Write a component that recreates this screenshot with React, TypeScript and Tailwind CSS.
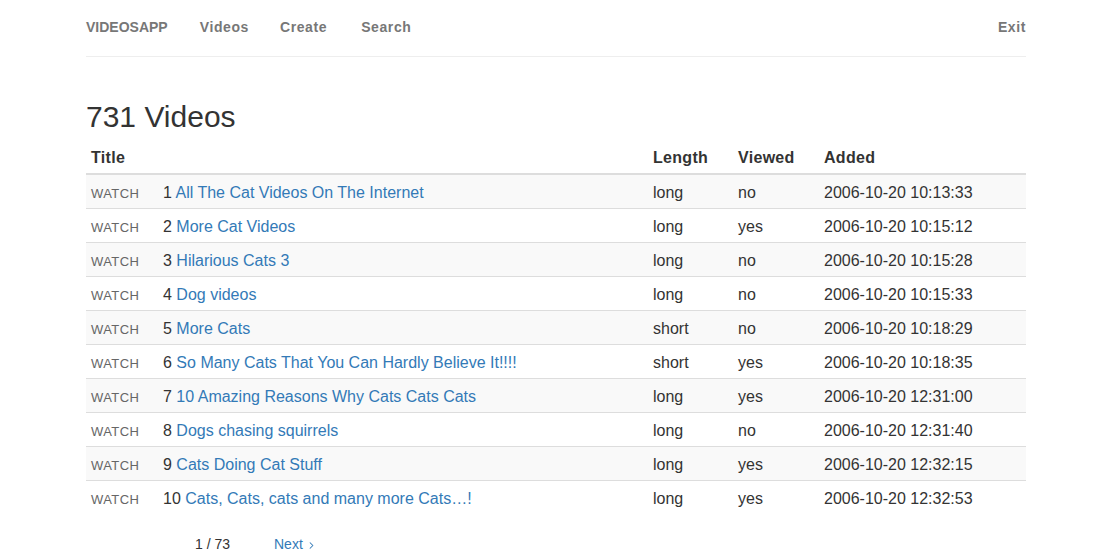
import { ChevronRight } from 'lucide-react'

const videos = [
  { id: 1, title: 'All The Cat Videos On The Internet', length: 'long', viewed: 'no', added: '2006-10-20 10:13:33' },
  { id: 2, title: 'More Cat Videos', length: 'long', viewed: 'yes', added: '2006-10-20 10:15:12' },
  { id: 3, title: 'Hilarious Cats 3', length: 'long', viewed: 'no', added: '2006-10-20 10:15:28' },
  { id: 4, title: 'Dog videos', length: 'long', viewed: 'no', added: '2006-10-20 10:15:33' },
  { id: 5, title: 'More Cats', length: 'short', viewed: 'no', added: '2006-10-20 10:18:29' },
  { id: 6, title: 'So Many Cats That You Can Hardly Believe It!!!!', length: 'short', viewed: 'yes', added: '2006-10-20 10:18:35' },
  { id: 7, title: '10 Amazing Reasons Why Cats Cats Cats', length: 'long', viewed: 'yes', added: '2006-10-20 12:31:00' },
  { id: 8, title: 'Dogs chasing squirrels', length: 'long', viewed: 'no', added: '2006-10-20 12:31:40' },
  { id: 9, title: 'Cats Doing Cat Stuff', length: 'long', viewed: 'yes', added: '2006-10-20 12:32:15' },
  { id: 10, title: 'Cats, Cats, cats and many more Cats…!', length: 'long', viewed: 'yes', added: '2006-10-20 12:32:53' },
]

export default function App() {
  return (
    <div className="min-h-[560px] bg-white text-[#333] font-['Liberation_Sans',Arial,sans-serif]">
      <div className="w-[940px] ml-[86px]">
        {/* Nav */}
        <nav className="h-[57px] flex items-center justify-between border-b border-[#eee] pb-[1px] text-[14px] font-bold text-[#777]">
          <div className="flex items-center">
            <a>VIDEOSAPP</a>
            <a className="ml-[32px] tracking-[0.6px]">Videos</a>
            <a className="ml-[31px] tracking-[0.6px]">Create</a>
            <a className="ml-[34px] tracking-[0.6px]">Search</a>
          </div>
          <a className="tracking-[0.6px]">Exit</a>
        </nav>

        <h2 className="mt-[43px] text-[30px] leading-[33px]">731 Videos</h2>

        <table className="mt-[7px] w-full border-collapse text-[16px]">
          <thead>
            <tr className="border-b-2 border-[#ddd]">
              <th colSpan={2} className="text-left font-bold px-[5px] pt-[2px] h-[34px] tracking-[0.3px]">Title</th>
              <th className="text-left font-bold px-[5px] pt-[2px] w-[85px] tracking-[0.3px]">Length</th>
              <th className="text-left font-bold px-[5px] pt-[2px] w-[86px] tracking-[0.3px]">Viewed</th>
              <th className="text-left font-bold px-[5px] pt-[2px] w-[207px] tracking-[0.3px]">Added</th>
            </tr>
          </thead>
          <tbody>
            {videos.map((v, i) => (
              <tr key={v.id} className={`border-t border-[#ddd] h-[34px] ${i % 2 === 0 ? 'bg-[#f9f9f9]' : ''}`}>
                <td className="px-[5px] w-[72px] text-[13px] text-[#666] pt-[5px] tracking-[0.4px]">WATCH</td>
                <td className="px-[5px] pt-[4px]">
                  {v.id} <a className="text-[#337ab7]">{v.title}</a>
                </td>
                <td className="px-[5px] pt-[4px]">{v.length}</td>
                <td className="px-[5px] pt-[4px]">{v.viewed}</td>
                <td className="px-[5px] pt-[4px]">{v.added}</td>
              </tr>
            ))}
          </tbody>
        </table>

        {/* Pager */}
        <div className="mt-[20px] pl-[109px] flex items-center text-[14px]">
          <span className="w-[79px]">1 / 73</span>
          <a className="flex items-center text-[#337ab7]">
            Next <ChevronRight className="w-[11px] h-[11px] ml-[3px] mt-[2px]" strokeWidth={2.2} />
          </a>
        </div>
      </div>
    </div>
  )
}
